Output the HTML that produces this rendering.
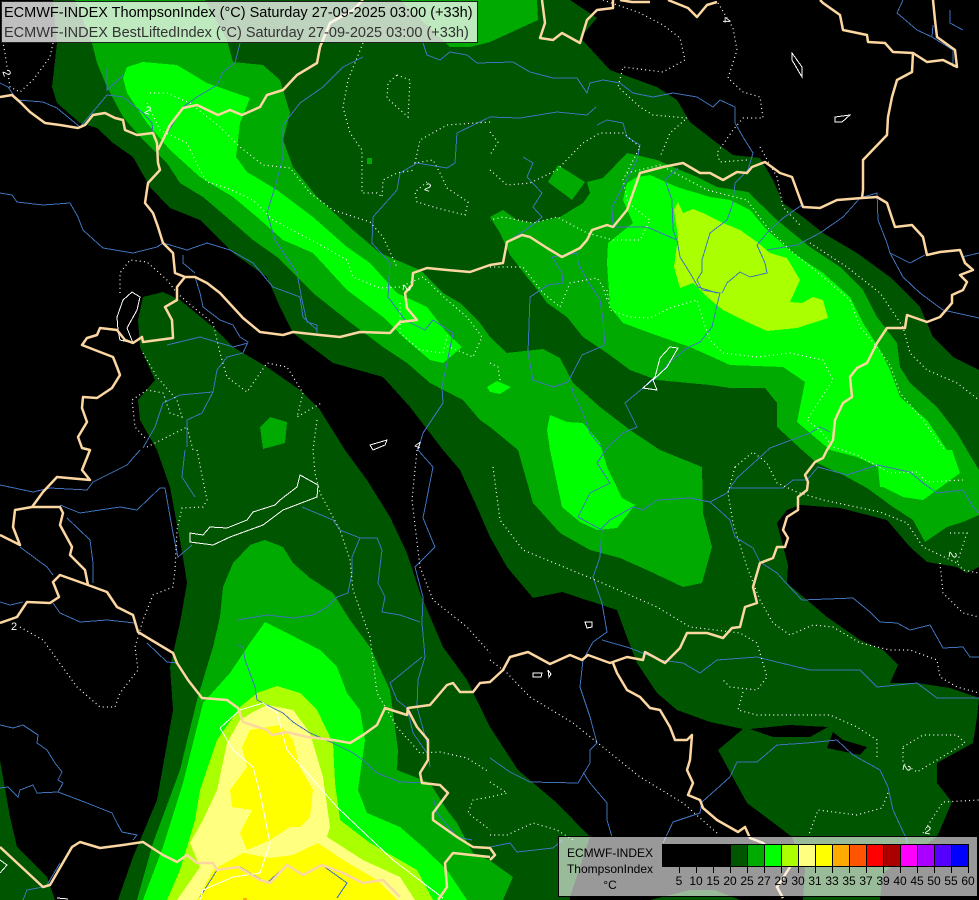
<!DOCTYPE html>
<html><head><meta charset="utf-8"><style>
html,body{margin:0;padding:0;background:#000;width:979px;height:900px;overflow:hidden}
svg{position:absolute;left:0;top:0;display:block}
text{font-family:"Liberation Sans",sans-serif}
</style></head><body>
<svg width="979" height="900" viewBox="0 0 979 900" xmlns="http://www.w3.org/2000/svg">
<rect width="979" height="900" fill="#000"/>
<g fill="#005500" shape-rendering="crispEdges">
<polygon points="53,0 57,43 52,87 57,103 80,123 97,128 113,143 133,157 150,187 170,208 200,220 233,253 267,277 280,307 293,333 333,363 383,377 410,407 443,450 460,470 477,507 490,537 507,567 533,598 562,592 617,610 628,640 637,663 657,693 677,710 710,722 743,729 718,750 747,803 783,830 792,837 805,870 803,900 880,900 883,873 937,837 952,802 937,783 937,763 973,743 977,717 979,698 950,688 917,683 890,683 898,665 883,650 860,640 827,617 787,583 788,565 777,523 787,510 800,505 840,508 887,520 910,547 927,562 957,567 967,573 979,567 979,370 953,357 933,337 920,307 890,277 857,253 823,233 803,217 783,203 773,180 760,158 733,155 713,140 690,122 677,100 657,87 610,70 587,45 580,38 597,18 570,0"/>
<polygon points="143,297 163,292 180,300 213,327 233,347 267,367 300,390 320,410 345,450 367,480 390,517 407,553 420,593 443,647 467,680 490,727 518,770 557,803 590,837 570,897 570,900 118,900 133,857 157,800 173,710 170,667 180,623 187,583 183,557 170,487 157,450 140,420 138,400 155,380 140,347 138,320"/>
<polygon points="0,760 10,817 17,847 47,877 55,900 0,900"/>
<polygon points="650,900 690,890 715,890 740,900"/>
</g>
<g fill="#000" shape-rendering="crispEdges">
<polygon points="750,729 773,737 810,737 828,727 790,725"/>
<polygon points="833,732 843,740 867,747 860,755 827,748"/>
</g>
<g fill="#00aa00" shape-rendering="crispEdges">
<polygon points="75,0 205,0 227,40 233,62 263,65 280,80 290,113 283,140 293,167 317,197 353,230 380,253 420,270 443,293 460,303 480,323 490,337 507,353 543,349 560,358 573,383 600,407 630,430 660,450 702,467 703,513 712,547 702,583 683,587 647,570 620,558 590,550 560,533 533,503 518,450 490,427 480,420 463,400 430,383 407,363 383,347 347,320 313,293 277,257 253,240 230,220 203,197 180,183 167,163 143,140 123,117 107,87 97,63 92,43"/>
<polygon points="400,0 537,0 538,20 490,42 470,47 450,47"/>
<polygon points="490,217 503,210 517,220 533,223 560,217 583,203 590,193 587,182 603,178 627,153 657,160 680,170 697,177 717,187 748,192 777,220 810,247 840,267 863,290 877,317 897,343 900,367 910,383 937,407 957,433 967,450 979,470 979,515 963,522 947,527 925,542 913,520 893,507 867,488 843,475 817,463 802,450 777,427 777,403 765,388 730,388 710,385 657,380 630,370 607,353 583,337 567,317 547,303 540,293 527,277 510,255 500,233"/>
<polygon points="548,182 558,165 585,182 572,200"/>
<polygon points="260,427 270,417 287,422 285,443 263,449"/>
<polygon points="367,158 372,158 372,164 367,164"/>
<polygon points="265,540 283,547 293,563 310,578 333,593 350,620 370,647 390,690 398,750 397,770 430,783 447,810 457,823 473,853 489,860 513,877 503,900 137,900 153,843 180,770 197,700 213,647 220,617 223,587 233,563 250,545"/>
</g>
<g fill="#00ff00" shape-rendering="crispEdges">
<polygon points="123,78 127,67 143,62 177,65 207,83 250,98 240,123 236,157 247,172 277,190 313,217 347,247 370,263 397,293 427,307 447,333 462,347 443,363 430,360 403,337 383,317 347,290 313,253 283,240 257,217 233,197 200,177 170,150 147,123 127,93"/>
<polygon points="637,177 650,175 677,187 710,197 730,200 750,210 767,230 793,253 823,273 850,297 863,323 880,350 890,370 900,397 927,420 947,450 952,450 960,473 923,500 903,497 883,487 880,487 878,467 857,457 830,450 797,422 805,382 783,367 730,365 690,347 650,333 623,323 610,307 607,263 608,243 633,223 623,200 627,183"/>
<polygon points="550,415 547,430 550,450 562,507 580,522 597,530 617,528 635,505 622,498 607,467 600,443 583,423 567,422"/>
<polygon points="487,387 497,381 511,387 500,394 490,392"/>
<polygon points="265,622 287,633 320,650 337,667 347,693 360,710 365,740 358,790 367,813 400,827 423,847 447,870 467,900 143,900 163,847 183,783 203,703 230,673 250,643"/>
</g>
<polygon fill="#aaff00" shape-rendering="crispEdges" points="678,202 683,213 693,209 703,213 723,223 740,230 757,242 770,253 787,258 800,280 790,302 802,303 813,297 823,300 828,318 797,328 767,331 747,322 723,310 707,297 693,283 680,288 674,267 678,237 674,210"/>
<g shape-rendering="crispEdges">
<polygon fill="#aaff00" points="277,686 300,693 317,710 333,743 335,783 340,820 370,843 417,870 433,900 167,900 180,870 195,820 200,790 217,740 240,707 257,693"/>
<polygon fill="#ffff80" points="267,705 293,710 310,733 323,777 330,827 327,837 363,860 400,877 415,900 177,900 200,867 190,843 203,820 217,790 227,743 240,720 253,712"/>
<polygon fill="#ffff00" points="250,730 280,725 293,740 300,767 313,790 310,817 300,827 290,827 270,840 247,850 240,833 252,810 232,807 230,790 247,767 242,747"/>
<polygon fill="#ffff00" points="318,843 343,860 377,880 397,900 197,900 213,870 243,853 270,858 293,855"/>
<rect x="243" y="898" width="4" height="2" fill="#ffaa00"/>
</g>
<g fill="none" stroke="#3f74bd" stroke-width="1" shape-rendering="crispEdges">
<polyline points="0,193 12,195 17,202 43,205 70,203 78,217 83,230 103,248 133,253 157,247 163,243 187,250 207,243 230,250 253,263 273,287 300,297 303,317 317,330"/>
<polyline points="240,43 235,63 223,72 217,85 197,97 183,107 163,140"/>
<polyline points="363,57 343,67 323,87 300,103 283,125 283,157 275,187 267,213 275,240 297,273 302,300 307,322 317,325 317,333"/>
<polyline points="0,83 8,87 17,100 43,102 57,108 80,127 97,107 107,95 123,97 143,113 152,123 153,133"/>
<polyline points="107,68 107,90 118,80 123,75"/>
<polyline points="195,277 200,293 203,307 220,320 233,325 240,337 248,342 243,353 227,357 217,370 213,392 180,395 163,403 155,427 143,448"/>
<polyline points="167,345 200,337 233,347 248,343"/>
<polyline points="213,392 202,413 187,420 187,447"/>
<polyline points="183,255 183,263 195,273"/>
<polyline points="423,43 427,55 440,60 450,52 467,55 477,63 513,62 530,72 553,78 577,78 587,93 590,83 603,80 620,83 633,93 653,97 673,93 697,97 713,107 720,100 735,107 735,123 743,137 753,153 748,170 735,183 733,203 727,220 710,233 702,260 702,272 697,280 702,290 720,293 717,305 712,327 700,342 687,348 670,362 657,377 643,388 625,403 637,427 623,433 607,448 597,463 610,483 590,493 578,517 602,530 600,557 593,577 602,603 607,632 593,642 583,660 580,687 590,717 597,743 590,750 590,763 578,783 530,782 510,772 490,758"/>
<polyline points="596,107 587,115 557,112 520,118 490,117 457,133 455,163 447,168 417,163 400,173 397,190 373,217 372,243 390,263 388,297 405,320 425,330 433,320 453,333 447,363 442,387 443,403 423,433 418,450 433,467 423,518 435,547 415,567 423,597 422,623 425,657 418,680 417,707 427,743 430,767"/>
<polyline points="597,125 607,120 623,123 627,137 640,145 637,160 612,207 613,227 647,227 677,240 680,257 690,273 698,287 717,293"/>
<polyline points="523,157 533,163 527,177 542,193 533,207 542,217 530,227 510,240"/>
<polyline points="678,168 665,180 672,200 673,230 678,243"/>
<polyline points="552,257 562,273 563,283 548,285 530,297 528,353 533,380 553,387 568,382 582,355 605,345 603,320 600,300 587,280 578,263 577,253 552,257"/>
<polyline points="572,387 573,393 583,413 590,433 602,448"/>
<polyline points="757,245 767,233 783,218 802,205"/>
<polyline points="767,250 797,245 820,233 843,217 860,198 877,193 878,220 887,243 890,253 910,263 925,255"/>
<polyline points="890,253 903,277 920,293 943,310 979,318"/>
<polyline points="962,257 979,253"/>
<polyline points="757,245 765,263 767,273 750,277 740,272 727,283 722,293"/>
<polyline points="932,37 917,30 903,18 897,13 903,0"/>
<polyline points="950,10 950,23 963,30"/>
<polyline points="933,25 932,37 953,50 953,67"/>
<polyline points="600,530 610,520 633,507 643,510 657,500 690,498 710,502 727,493 730,488 783,488 793,480 807,480 818,467 847,475 877,465 910,472 923,483 937,493 963,490 973,507 979,513"/>
<polyline points="710,502 730,520 735,537 753,548 760,562 777,573 785,582 802,600 853,598 870,612 880,622 897,623 910,630 930,625 943,648 963,647 970,657 979,657"/>
<polyline points="730,488 737,478 757,460 770,448 810,433 820,427 830,432"/>
<polyline points="602,640 630,648 660,660 683,663 700,673 717,660 757,657 777,662 810,670 860,670 877,687 917,683 937,698 979,698"/>
<polyline points="730,777 702,802 700,813 673,822 663,843"/>
<polyline points="730,777 737,762 757,762 777,745 807,743 837,740 853,755 880,770 888,787 893,810 907,840 907,860"/>
<polyline points="583,772 590,783 607,803 607,820 612,837"/>
<polyline points="490,847 510,843 517,852 553,848 562,840"/>
<polyline points="0,485 33,492 50,488 87,490 93,482 127,465 140,450"/>
<polyline points="60,505 80,513 120,507 137,510 160,488 165,488 173,533 178,557 192,545"/>
<polyline points="67,518 90,540 93,563 93,583"/>
<polyline points="20,547 47,567 53,575"/>
<polyline points="0,602 10,605 23,602"/>
<polyline points="53,603 60,613 80,622 107,620 135,623"/>
<polyline points="147,643 167,662 177,663"/>
<polyline points="185,450 182,477 195,497"/>
<polyline points="302,507 333,520 340,530 360,538 377,538 382,550 378,583 385,597 382,612 400,615 420,622"/>
<polyline points="360,538 352,557 352,573 348,593 337,597 327,607 313,615 293,618 267,615 237,620"/>
<polyline points="238,645 243,647 245,660 255,687 257,700 283,713 293,722 310,733 333,743 353,753 363,760 377,773 400,782 430,783"/>
<polyline points="422,657 390,683 397,700 407,708 413,733 427,753"/>
<polyline points="0,725 13,728 23,725 38,735 37,743 47,750 55,763 62,772 58,780 63,783 58,792 87,803 112,813 117,823 122,832 137,835 133,840"/>
<polyline points="0,788 8,787 18,797 20,790 33,785 37,793 58,792"/>
<polyline points="200,897 217,870 240,867 267,883 287,865 303,875 322,865 347,883 337,898"/>
<polyline points="43,887 27,890 23,900"/>
<polyline points="47,885 60,863"/>
<polyline points="433,797 437,813 457,837 472,840"/>
</g>
<g fill="none" stroke="#fff" stroke-width="1.2" stroke-dasharray="1 3.2">
<polyline points="53,43 50,57 33,80 20,92 10,87 5,53 3,43"/>
<polyline points="150,93 167,93 190,103 220,127 240,147 263,165 290,168 310,193 333,210 370,222 383,237 397,267"/>
<polyline points="147,103 160,130 187,143 200,170 207,182 227,188 253,200 273,220 317,243 347,260 353,277 380,288 400,287 423,277 447,300 467,317 482,337 473,357 445,345"/>
<polyline points="400,303 400,333 420,350 443,353 448,333"/>
<polyline points="397,75 410,80 408,117 387,98 388,83 397,75"/>
<polyline points="363,43 348,80 343,107 350,133 362,150 362,193 377,193 382,197 383,180 397,173 415,170"/>
<polyline points="490,122 447,125 420,140 415,163 433,160 440,173 447,188 468,202 465,215 437,208 417,202 415,192 427,182"/>
<polyline points="490,170 507,185 530,183 557,170 583,143 600,133 623,133 640,147 623,180 628,203 650,220 640,240 613,240 587,233 557,217 533,223 503,217 490,220"/>
<polyline points="490,132 498,142 490,155"/>
<polyline points="603,0 640,13 663,25 680,38 685,60 663,72 623,67 618,87 640,107 653,115 687,118 670,133 660,157"/>
<polyline points="718,3 733,28 737,50 728,78 743,92 760,97 763,118 743,118 733,130 717,153 720,162 747,160"/>
<polyline points="760,147 777,177 783,207 800,225"/>
<polyline points="627,173 660,165 707,190 747,200 767,227 790,250 823,277 850,300 860,327 877,347 890,365 900,393 923,420 937,440 945,450"/>
<polyline points="810,243 847,267 880,293 903,327 910,353 927,370 957,383 979,400"/>
<polyline points="607,290 610,310 630,317 650,318 670,308 697,300 703,320 710,340 723,353 757,357 790,353 823,360 833,380 820,400 807,420 820,430 833,447 857,455 890,473 917,472 927,482 963,480"/>
<polyline points="490,363 498,367 500,380"/>
<polyline points="490,267 523,267 543,293 560,307 570,283 597,278 603,287 607,300"/>
<polyline points="120,293 120,273 130,260 147,262 167,280 177,293 193,307 213,323 220,353 227,377 247,392 267,363 287,367 303,393 297,417 323,402"/>
<polyline points="143,353 157,377 177,400 182,417 170,413 163,393 147,390 132,400 135,427 147,440"/>
<polyline points="147,447 187,427 193,450"/>
<polyline points="317,420 313,450 315,473 320,493 340,530 350,560 353,590 370,637 377,693 397,727 420,753 440,752 467,758 489,772"/>
<polyline points="197,450 207,500 203,507 182,508 177,530 175,570 173,587 153,595 143,620 135,647 138,670 120,693 115,707 100,707 77,687 43,640 20,627"/>
<polyline points="417,450 412,500 420,567 433,600 467,627 490,653"/>
<polyline points="493,467 500,520 523,550 600,582 657,607 690,627 740,633 757,643 767,677 757,690 730,687 723,680"/>
<polyline points="743,692 738,710 757,715 830,715 857,727 877,740 877,760"/>
<polyline points="490,660 507,673 530,697 573,723 640,777 683,803 717,833"/>
<polyline points="735,467 728,493 733,523 747,567 760,600 773,623 790,635 813,625 833,627 860,643 890,650 910,650 937,660 940,677 957,687 979,693"/>
<polyline points="735,467 753,452 767,463 777,483 797,492 823,500 880,512 907,523 923,547 957,563"/>
<polyline points="940,563 943,593 963,613 979,617"/>
<polyline points="950,533 967,533 957,563 963,570 979,573"/>
<polyline points="903,747 923,735 957,735 965,743 937,760 917,772 903,763 903,747"/>
<polyline points="808,837 818,810 857,815 882,808 888,793"/>
<polyline points="923,833 943,802 979,800"/>
<polyline points="490,835 507,835 533,823 557,830 573,840"/>
<polyline points="490,782 507,793 490,797"/>
<polyline points="490,797 473,800 468,813 490,830"/>
</g>
<g fill="none" stroke="#fff" stroke-width="1" shape-rendering="crispEdges">
<polygon points="300,475 318,485 317,497 283,510 263,525 230,537 213,545 190,542 190,533 203,535 210,527 227,528 247,520 253,512 275,505 280,500 297,487"/>
<polygon points="132,292 140,297 137,310 127,328 133,343 120,340 118,330 117,317 123,300"/>
<polygon points="370,445 387,440 385,445 373,450"/>
<polygon points="792,53 802,67 802,77 792,60"/>
<polygon points="835,117 850,115 842,122 835,122"/>
<polygon points="670,347 678,348 667,367 653,380 657,390 643,388 655,377 660,358"/>
<polygon points="585,622 592,622 592,627 587,628"/>
<polygon points="533,673 542,673 541,677 533,677"/>
<polygon points="548,670 551,674 549,677"/>
<polyline points="220,728 240,710 263,703 277,713 287,750 337,807 393,860 443,898"/>
<polyline points="220,728 233,750 253,767 260,793 270,843 260,873 233,877 203,890 200,900"/>
<polyline points="0,860 7,865 0,873"/>
<polyline points="57,898 68,899"/>
</g>
<g fill="none" stroke="#fdd7a2" stroke-width="2.5" stroke-linejoin="round">
<polyline points="0,97 12,95 20,102 30,112 45,123 60,125 78,128 85,125 93,115 105,113 115,118 123,120 125,130 137,135 153,133 157,143 158,163 160,170 148,183 145,203 153,213 158,227 163,243 173,253 175,273 185,277 195,277 207,283 220,293 243,318 260,332 283,335 293,332 320,335 340,337 360,332 390,333 400,322 417,320 407,308 405,293 412,285 413,273 427,268 447,270 470,272 490,265 503,263 507,242 522,235 530,237 547,248 562,257 580,248 587,240 592,230 607,225 613,227 627,210 633,193 640,173 663,167 683,163 700,173 710,173 723,180 737,172 747,173 752,167 765,162 780,173 792,177 803,207 820,208 837,200 862,198 877,197 887,203 895,227 912,225 923,237 927,255 940,252 960,250 965,263 973,270 960,275 967,282 963,290 952,295 952,303 940,317 927,322 907,315 905,328 887,328 877,343 867,363 857,368 850,377 852,397 843,403 835,420 833,440 827,450 823,458 815,462 805,475 808,482 807,490 798,497 798,510 787,517 783,530 788,538 785,547 777,547 773,558 760,563 753,587 757,603 745,607 740,627 732,628 723,638 707,633 687,633 680,648 665,663 645,652 643,660 627,657 610,663 588,655 582,660 570,655 550,664 528,652 510,657 503,670 490,682 480,683 473,692 460,692 453,683 447,685 430,705 408,708 407,715 385,708 377,725 363,735 350,743 333,740 307,737 287,732 272,735 267,730 243,722 238,708 227,700 202,698 188,680 177,663 173,653 138,632 133,615 117,607 107,592 88,585 85,570 70,555 72,547 60,525 63,513 60,507 32,507 15,510 13,527 20,545 0,535"/>
<polyline points="32,507 43,492 57,477 90,480 82,470 90,450 82,448 78,437 87,422 82,408 83,397 97,398 112,388 120,375 117,367 113,357 100,352 82,345 87,338 97,335 100,328 117,330 125,340 133,343 142,337 143,342 173,338 172,320 165,307 177,300 177,287 185,277"/>
<polyline points="0,623 17,617 27,602 50,603 59,597 53,582 60,575 88,585"/>
<polyline points="158,150 170,125 183,108 197,105 218,115 230,110 242,115 260,107 267,95 283,90 297,75 317,63 320,47 330,23 353,10 363,0"/>
<polyline points="542,0 545,23 540,38 553,40 562,33 580,43 587,20 597,10 613,8 613,0"/>
<polyline points="620,0 632,2 650,2"/>
<polyline points="668,0 688,8 697,17 707,5 717,2"/>
<polyline points="820,0 823,3 840,15 843,30 867,35 868,42 885,43 893,52 913,53 912,72 897,80 892,97 888,117 887,135 863,160 863,190 862,198"/>
<polyline points="913,53 927,62 943,60 957,67 955,50 937,37 935,20 933,0"/>
<polyline points="0,847 43,887 50,885 72,847 80,842 100,848 123,845 143,842 163,855 177,862 187,855 197,863 213,863 217,870 238,867 260,880 270,883 287,865 303,875 322,865 343,873 363,883 383,880 400,897"/>
<polyline points="407,708 417,727 428,740 428,760 420,773 422,783 440,785 448,793 433,813 433,820 457,837 473,847 490,848 495,855 490,860"/>
<polyline points="490,857 453,853 445,863 447,887 438,900"/>
<polyline points="613,663 617,673 627,690 640,697 650,708 660,710 670,727 675,740 687,740 692,735 690,760 687,770 693,783 688,795 700,800 703,808 717,820 738,832 745,827 750,838 763,843 790,867 777,887 783,898"/>
</g>
<g fill="#fff" font-size="11" text-anchor="middle">
<text x="7" y="77" transform="rotate(70 7 73)">2</text>
<text x="148" y="114" transform="rotate(20 148 110)">2</text>
<text x="428" y="191" transform="rotate(20 428 187)">2</text>
<text x="407" y="292" transform="rotate(100 407 288)">2</text>
<text x="14" y="630">2</text>
<text x="907" y="772" transform="rotate(100 907 768)">2</text>
<text x="928" y="834" transform="rotate(10 928 830)">2</text>
<text x="953" y="559" transform="rotate(100 953 555)">2</text>
<text x="727" y="24" transform="rotate(90 727 20)">4</text>
<text x="418" y="449" transform="rotate(20 418 445)">4</text>
</g>
<rect x="1.5" y="1.5" width="476" height="41" fill="#fff" fill-opacity=".75" stroke="#222" stroke-width="1"/>
<text x="4" y="17" font-size="14.5" fill="#000">ECMWF-INDEX ThompsonIndex (°C) Saturday 27-09-2025 03:00 (+33h)</text>
<text x="4" y="37" font-size="14.5" fill="#333">ECMWF-INDEX BestLiftedIndex (°C) Saturday 27-09-2025 03:00 (+33h)</text>
<rect x="558.5" y="836.5" width="419" height="60" fill="#fff" fill-opacity=".6" stroke="#000" stroke-width="1"/>
<g font-size="12" fill="#000" text-anchor="middle">
<text x="610" y="857">ECMWF-INDEX</text>
<text x="610" y="873">ThompsonIndex</text>
<text x="610" y="889">°C</text>
</g>
<g shape-rendering="crispEdges">
<rect x="662" y="844" width="68" height="22" fill="#000"/>
<rect x="730" y="844" width="17" height="22" fill="#005500"/>
<rect x="747" y="844" width="17" height="22" fill="#00aa00"/>
<rect x="764" y="844" width="17" height="22" fill="#00ff00"/>
<rect x="781" y="844" width="17" height="22" fill="#aaff00"/>
<rect x="798" y="844" width="17" height="22" fill="#ffff80"/>
<rect x="815" y="844" width="17" height="22" fill="#ffff00"/>
<rect x="832" y="844" width="17" height="22" fill="#ffaa00"/>
<rect x="849" y="844" width="17" height="22" fill="#ff5500"/>
<rect x="866" y="844" width="17" height="22" fill="#ff0000"/>
<rect x="883" y="844" width="17" height="22" fill="#aa0000"/>
<rect x="900" y="844" width="17" height="22" fill="#ff00ff"/>
<rect x="917" y="844" width="17" height="22" fill="#aa00ff"/>
<rect x="934" y="844" width="17" height="22" fill="#5500ff"/>
<rect x="951" y="844" width="17" height="22" fill="#0000ff"/>
<path fill="none" stroke="#000" stroke-width="1" d="M662.5 844.5H968.5V866.5H662.5ZM679.5 844V873M696.5 844V873M713.5 844V873M730.5 844V873M747.5 844V873M764.5 844V873M781.5 844V873M798.5 844V873M815.5 844V873M832.5 844V873M849.5 844V873M866.5 844V873M883.5 844V873M900.5 844V873M917.5 844V873M934.5 844V873M951.5 844V873M968.5 844V873"/>
</g>
<g font-size="12" fill="#000" text-anchor="middle">
<text x="679" y="885">5</text><text x="696" y="885">10</text><text x="713" y="885">15</text><text x="730" y="885">20</text><text x="747" y="885">25</text><text x="764" y="885">27</text><text x="781" y="885">29</text><text x="798" y="885">30</text><text x="815" y="885">31</text><text x="832" y="885">33</text><text x="849" y="885">35</text><text x="866" y="885">37</text><text x="883" y="885">39</text><text x="900" y="885">40</text><text x="917" y="885">45</text><text x="934" y="885">50</text><text x="951" y="885">55</text><text x="968" y="885">60</text>
</g>
</svg>
</body></html>
